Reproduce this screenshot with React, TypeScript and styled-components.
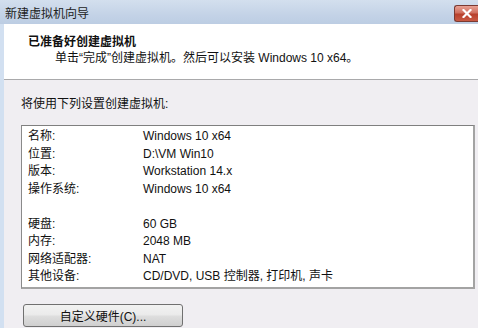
import React from "react";
import styled, { createGlobalStyle } from "styled-components";

const GlobalStyle = createGlobalStyle`
  html, body {
    margin: 0;
    padding: 0;
    background: #f0eef2;
  }
  body {
    font-family: "Liberation Sans", "Noto Sans CJK SC", sans-serif;
    font-size: 12px;
    color: #111;
  }
`;

const Window = styled.div`
  width: 478px;
  height: 328px;
  overflow: hidden;
  display: flex;
  flex-direction: column;
  background: #f0eef2;
`;

const TitleBar = styled.div`
  height: 24px;
  flex: none;
  display: flex;
  align-items: center;
  justify-content: space-between;
  padding-left: 5px;
  background: linear-gradient(to bottom, #d3dfee 0%, #c4d3e7 60%, #bccde3 100%);
  color: #222;
  font-size: 12px;
`;

const CloseButton = styled.div`
  width: 24px;
  height: 15px;
  margin-top: 2px;
  margin-right: -1px;
  border: 1px solid #7a3a32;
  border-right: none;
  border-radius: 3px 0 0 3px;
  background: linear-gradient(to bottom, #e8a194 0%, #d0705f 45%, #b8402c 55%, #c95a44 100%);
  display: flex;
  align-items: center;
  justify-content: center;
`;

const Frame = styled.div`
  flex: 1;
  display: flex;
  flex-direction: column;
  border-left: 4px solid #d2e0f1;
`;

const Header = styled.div`
  height: 56px;
  flex: none;
  box-sizing: border-box;
  background: #ffffff;
  border-bottom: 1px solid #a9a9ab;
  padding: 10px 0 0 24px;
`;

const HeaderTitle = styled.div`
  font-weight: bold;
  font-size: 12px;
  line-height: 16px;
`;

const HeaderText = styled.div`
  font-size: 12px;
  line-height: 17px;
  padding-left: 27px;
`;

const Content = styled.div`
  padding: 16px 0 0 17px;
  display: flex;
  flex-direction: column;
  align-items: flex-start;
`;

const Caption = styled.div`
  line-height: 16px;
`;

const SummaryBox = styled.div`
  box-sizing: border-box;
  width: 454px;
  height: 164px;
  margin-top: 13px;
  background: #ffffff;
  border-top: 1px solid #7f7f7f;
  border-left: 1px solid #8a8a8a;
  border-right: 2px solid #a3a3a3;
  border-bottom: 2px solid #a3a3a3;
  padding: 2px 0 0 6px;
`;

const Row = styled.div<{ $gap?: boolean }>`
  display: grid;
  grid-template-columns: 115px 1fr;
  line-height: 17.5px;
  margin-top: ${(p) => (p.$gap ? "17.5px" : "0")};
`;

const Button = styled.button`
  margin: 15px 0 0 2px;
  width: 160px;
  height: 23px;
  box-sizing: border-box;
  border: 1px solid #707070;
  border-radius: 3px;
  background: linear-gradient(to bottom, #f2f2f2 0%, #ebebeb 45%, #dddddd 55%, #cfcfcf 100%);
  font-family: inherit;
  font-size: 12px;
  color: #111;
  padding: 0;
`;

const rows: { label: string; value: string; gap?: boolean }[] = [
  { label: "名称:", value: "Windows 10 x64" },
  { label: "位置:", value: "D:\\VM Win10" },
  { label: "版本:", value: "Workstation 14.x" },
  { label: "操作系统:", value: "Windows 10 x64" },
  { label: "硬盘:", value: "60 GB", gap: true },
  { label: "内存:", value: "2048 MB" },
  { label: "网络适配器:", value: "NAT" },
  { label: "其他设备:", value: "CD/DVD, USB 控制器, 打印机, 声卡" },
];

export default function App() {
  return (
    <>
      <GlobalStyle />
      <Window>
        <TitleBar>
          <span>新建虚拟机向导</span>
          <CloseButton>
            <svg width="10" height="9" viewBox="0 0 10 9">
              <path d="M1.5 1 L8.5 8 M8.5 1 L1.5 8" stroke="#fff" strokeWidth="2.2" strokeLinecap="square" />
            </svg>
          </CloseButton>
        </TitleBar>
        <Frame>
          <Header>
            <HeaderTitle>已准备好创建虚拟机</HeaderTitle>
            <HeaderText>单击“完成”创建虚拟机。然后可以安装 Windows 10 x64。</HeaderText>
          </Header>
          <Content>
            <Caption>将使用下列设置创建虚拟机:</Caption>
            <SummaryBox>
              {rows.map((r, i) => (
                <Row key={i} $gap={r.gap}>
                  <span>{r.label}</span>
                  <span>{r.value}</span>
                </Row>
              ))}
            </SummaryBox>
            <Button>自定义硬件(C)...</Button>
          </Content>
        </Frame>
      </Window>
    </>
  );
}
